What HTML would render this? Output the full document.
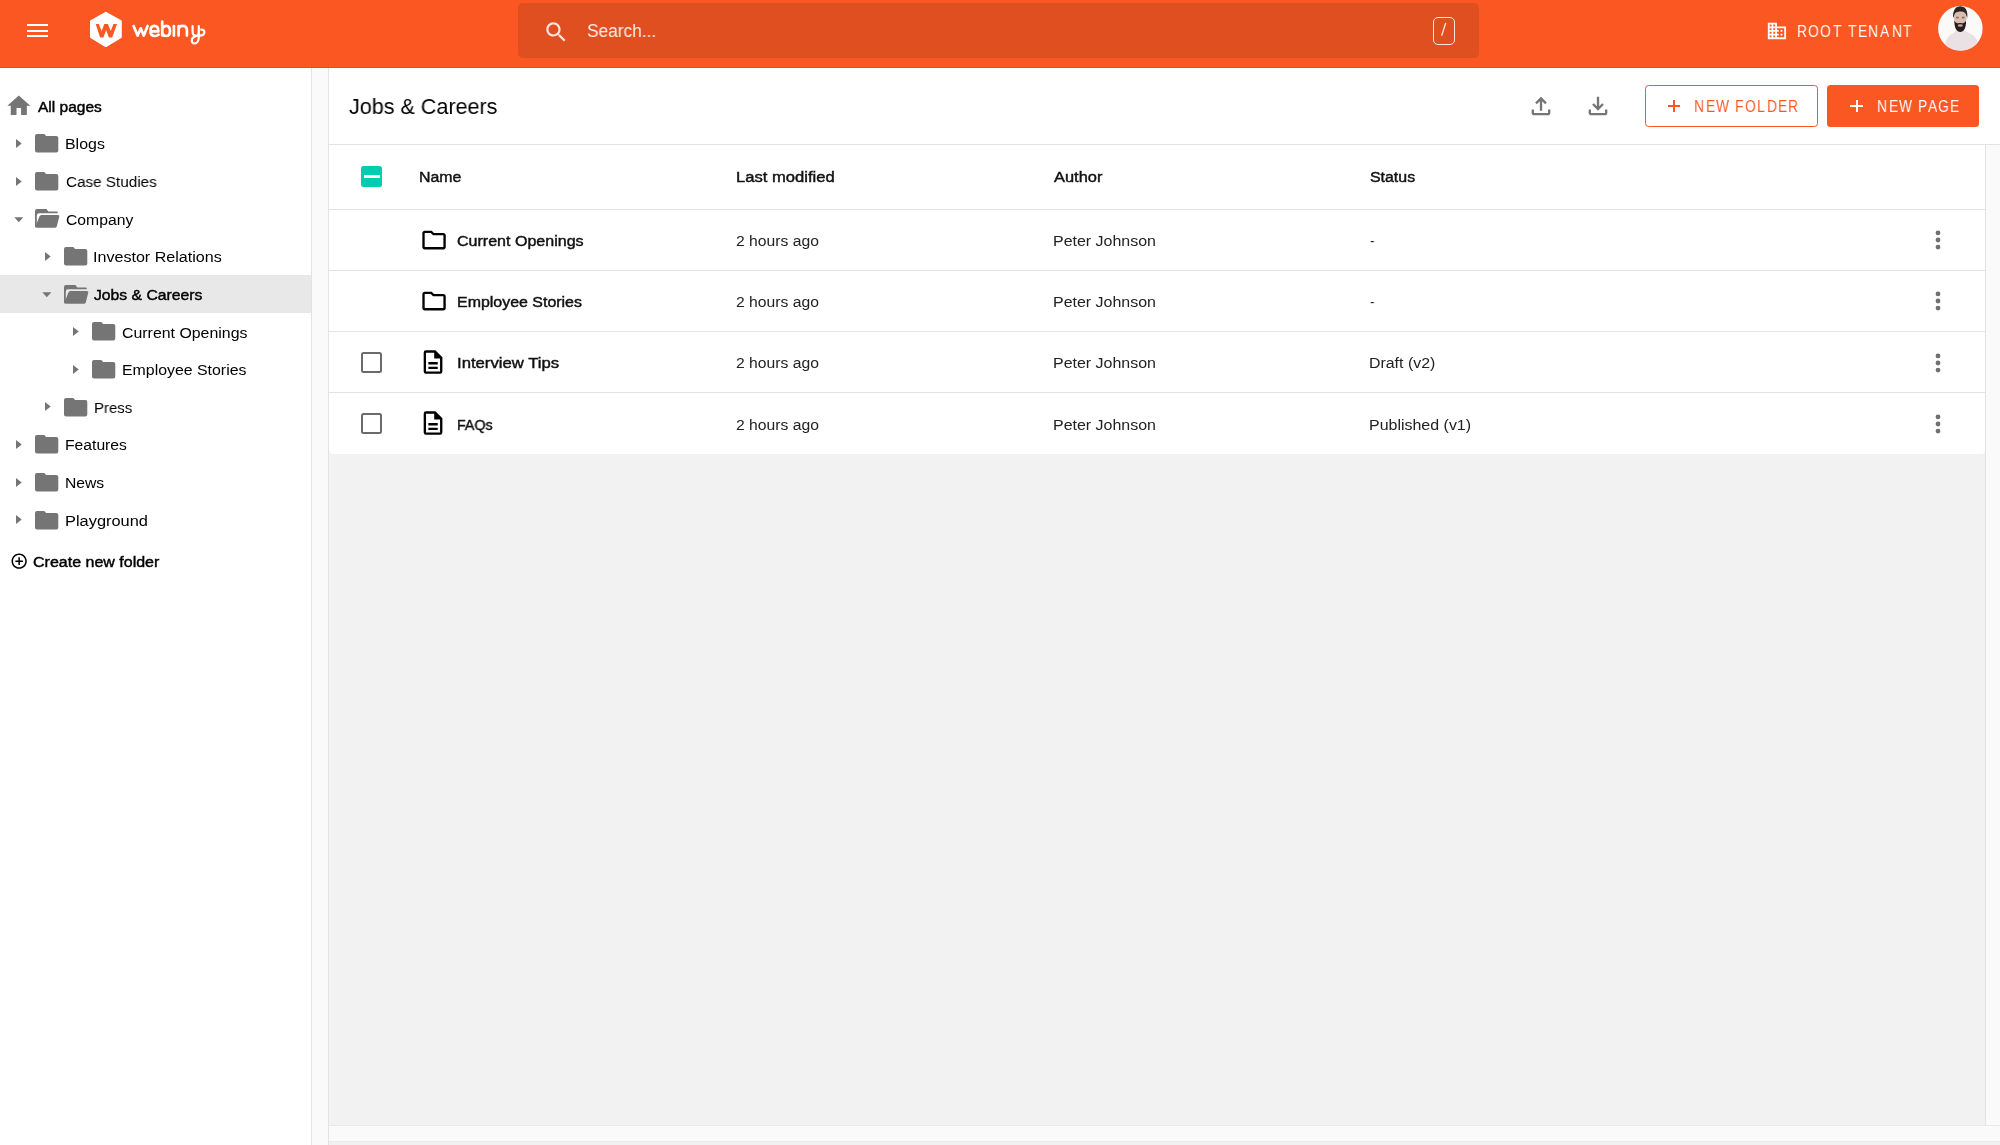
<!DOCTYPE html>
<html><head><meta charset="utf-8"><title>Webiny</title>
<style>
html,body{margin:0;padding:0;width:2000px;height:1145px;overflow:hidden;background:#f1f1f1;font-family:"Liberation Sans",sans-serif}
.r{position:absolute}
.t{position:absolute;white-space:nowrap;transform-origin:0 0;will-change:transform}
.i{position:absolute;overflow:visible}
</style></head><body>
<!-- top bar -->
<div class="r" style="left:0;top:0;width:2000px;height:67px;background:#fa5723"></div>
<div class="r" style="left:0;top:66.5px;width:2000px;height:1.3px;background:#f44a10"></div>
<div class="r" style="left:518px;top:2.6px;width:961.3px;height:55.9px;background:#e04f20;border-radius:5px"></div>
<!-- sidebar -->
<div class="r" style="left:0;top:68px;width:311px;height:1077px;background:#fff"></div>
<div class="r" style="left:311px;top:68px;width:1px;height:1077px;background:#e3e3e3"></div>
<div class="r" style="left:312px;top:68px;width:16px;height:1077px;background:#fafafa"></div>
<div class="r" style="left:328px;top:68px;width:1px;height:1077px;background:#e3e3e3"></div>
<div class="r" style="left:0;top:275px;width:311px;height:37.5px;background:#e8e8e8"></div>
<!-- content header -->
<div class="r" style="left:329px;top:68px;width:1671px;height:76px;background:#fff"></div>
<div class="r" style="left:329px;top:144px;width:1671px;height:1px;background:#e3e3e3"></div>
<!-- right strip -->
<div class="r" style="left:1985px;top:145px;width:1px;height:981px;background:#e3e3e3"></div>
<div class="r" style="left:1986px;top:145px;width:14px;height:981px;background:#fafafa"></div>
<!-- gray area -->
<div class="r" style="left:329px;top:145px;width:1656px;height:980px;background:#f2f2f2"></div>
<div class="r" style="left:329px;top:1125px;width:1671px;height:1px;background:#e8e8e8"></div>
<div class="r" style="left:329px;top:1126px;width:1671px;height:15px;background:#fafafa"></div>
<div class="r" style="left:329px;top:1141px;width:1671px;height:1px;background:#ebebeb"></div>
<!-- table -->
<div class="r" style="left:329px;top:145px;width:1656px;height:308.5px;background:#fff;border-radius:0 0 4px 4px"></div>
<div class="r" style="left:329px;top:209px;width:1656px;height:1px;background:#e3e3e3"></div>
<div class="r" style="left:329px;top:270px;width:1656px;height:1px;background:#e3e3e3"></div>
<div class="r" style="left:329px;top:331px;width:1656px;height:1px;background:#e3e3e3"></div>
<div class="r" style="left:329px;top:392px;width:1656px;height:1px;background:#e3e3e3"></div>
<!-- buttons -->
<div class="r" style="left:1644.6px;top:85.3px;width:173px;height:41.5px;border:1.5px solid #fa5723;border-radius:3.5px;box-sizing:border-box"></div>
<div class="r" style="left:1827.2px;top:85px;width:151.7px;height:41.8px;background:#fa5723;border-radius:3.5px"></div>
<div class="r" style="left:27px;top:24px;width:21px;height:2.2px;background:#fff"></div>
<div class="r" style="left:27px;top:29.6px;width:21px;height:2.2px;background:#fff"></div>
<div class="r" style="left:27px;top:35.3px;width:21px;height:2.2px;background:#fff"></div>
<svg class="i" style="left:88.00px;top:10.00px;width:36.00px;height:40.00px" viewBox="88 10 36 40"><path d="M105.8 12.9 L120.7 21.1 L120.7 37 L105.8 46 L91.1 37 L91.1 21.1 Z" fill="#fff" stroke="#fff" stroke-width="2.2" stroke-linejoin="round"/><path d="M95.7 24 L98.8 24 L101.6 31 L104.4 24 L107.9 24 L110.7 31 L113.5 24 L117 24 L112.2 37.6 L108.9 37.6 L106.15 29.9 L103.4 37.6 L100.1 37.6 Z" fill="#fa5723"/></svg>
<svg class="i" style="left:128.00px;top:16.00px;width:84.00px;height:32.00px" viewBox="128 16 84 32"><g fill="none" stroke="#fff" stroke-width="2.7" stroke-linecap="round" stroke-linejoin="round"><path d="M133.6 26 L137.6 35.6 L140.7 28.3 L143.8 35.6 L147.6 26"/><path d="M150.8 31.4 H158.4 C158.4 27.7 156.5 25.8 154.4 25.8 C151.8 25.8 150.4 28 150.4 31 C150.4 34.2 152.3 36 155 36 C156.6 36 157.7 35.5 158.6 34.6"/><path d="M162.2 21.5 V35.5 M162.2 30.8 C162.2 27.6 164 25.8 166.2 25.8 C168.6 25.8 170 28 170 31 C170 34 168.6 36 166.2 36 C164 36 162.2 34.4 162.2 31"/><path d="M173.9 26.2 V35.6"/><path d="M178.6 35.6 V26.2 M178.6 30.2 C178.6 27.3 180.3 25.8 182.6 25.8 C185.4 25.8 186.9 27.5 186.9 30.2 V35.6"/><path d="M192.6 26.2 V31.5 C192.6 34.5 194.2 35.8 196.2 35.8 C198 35.8 198.8 34.8 198.8 32 V26.2 V37 C198.8 41 197 43.5 194.6 43.5 C192.4 43.5 191.6 41.7 191.8 40.2 C192.2 37 195.5 35.6 199.5 35.6 C202.5 35.6 204.4 34 204.4 32 C204.4 30.4 203 29.3 201.2 29.6" stroke-width="2.2"/></g></svg>
<svg class="i" style="left:542.80px;top:18.60px;width:26.40px;height:26.40px" viewBox="0 0 24 24"><path fill="rgba(255,255,255,0.85)" d="M15.5 14h-.79l-.28-.27C15.41 12.59 16 11.11 16 9.5 16 5.91 13.09 3 9.5 3S3 5.91 3 9.5 5.91 16 9.5 16c1.61 0 3.09-.59 4.23-1.57l.27.28v.79l5 4.99L20.49 19l-4.99-5zm-6 0C7.01 14 5 11.99 5 9.5S7.01 5 9.5 5 14 7.01 14 9.5 11.99 14 9.5 14z"/></svg>
<div class="r" style="left:1432.6px;top:16.6px;width:22.2px;height:28.2px;border:1.6px solid rgba(255,255,255,0.85);border-radius:5px;box-sizing:border-box"></div>
<svg class="i" style="left:1436.00px;top:18.00px;width:16.00px;height:24.00px" viewBox="1436 18 16 24"><path d="M1441.8 35.3 L1445.6 23.3" stroke="rgba(255,255,255,0.85)" stroke-width="1.3" stroke-linecap="round"/></svg>
<svg class="i" style="left:1766.20px;top:19.80px;width:21.90px;height:21.90px" viewBox="0 0 24 24"><path fill="#fff" d="M12 7V3H2v18h20V7H12zM6 19H4v-2h2v2zm0-4H4v-2h2v2zm0-4H4V9h2v2zm0-4H4V5h2v2zm4 12H8v-2h2v2zm0-4H8v-2h2v2zm0-4H8V9h2v2zm0-4H8V5h2v2zm10 12h-8v-2h2v-2h-2v-2h2v-2h-2V9h8v10zm-2-8h-2v2h2v-2zm0 4h-2v2h2v-2z"/></svg>
<svg class="i" style="left:1937.60px;top:5.80px;width:44.80px;height:44.80px" viewBox="0 0 45 45"><defs><clipPath id="ac"><circle cx="22.5" cy="22.5" r="22.4"/></clipPath></defs><g clip-path="url(#ac)"><rect width="45" height="45" fill="#fcfaf9"/><path d="M6 45 C7 36 9 30 15 27.5 L19 24 L26 24 L31 27 C37 29 41 34 42 45 Z" fill="#e9e1e4"/><path d="M7 40 C9 41 11 42 12 45 L6 45 Z" fill="#d9b9a9"/><ellipse cx="22.3" cy="12.2" rx="6.4" ry="8.2" fill="#dcbcae"/><path d="M15.2 12 C14.6 5 17.5 0.3 22.3 0.3 C27.2 0.3 30.2 4 29.4 12 L28.4 9.5 C27.8 6.2 25 5.6 22.3 5.6 C19.5 5.6 17 6.3 16.3 9.5 Z" fill="#2b2524"/><path d="M16.4 14.8 C16.4 22.5 19 26 22.4 26 C25.8 26 28.2 22.5 28.2 14.8 C26.5 17.8 24 17.4 22.4 17.2 C20.5 17.4 18 17.8 16.4 14.8 Z" fill="#251e1c"/><rect x="18.2" y="10.8" width="2.6" height="1.6" fill="#8a6a5f"/><rect x="24" y="10.8" width="2.6" height="1.6" fill="#8a6a5f"/><ellipse cx="22.4" cy="19.6" rx="2.6" ry="1.2" fill="#c9a99c"/></g></svg>
<svg class="i" style="left:4.70px;top:92.00px;width:27.60px;height:27.60px" viewBox="0 0 24 24"><path fill="#757575" d="M10 20v-6h4v6h5v-8h3L12 3 2 12h3v8z"/></svg>
<svg class="i" style="left:34.35px;top:133.20px;width:26.00px;height:21.00px" viewBox="-1 -1 26 21"><path fill="#757575" d="M2 0 H9.3 L11.1 2 H21.3 Q23.3 2 23.3 4 V16.55 Q23.3 18.55 21.3 18.55 H2 Q0 18.55 0 16.55 V2 Q0 0 2 0 Z"/></svg>
<svg class="i" style="left:15.40px;top:138.00px;width:8.00px;height:11.00px" viewBox="15.399999999999999 138.0 8 11"><path fill="#757575" d="M16.4 139.0 L22.099999999999998 143.45 L16.4 147.9 Z"/></svg>
<svg class="i" style="left:34.35px;top:170.84px;width:26.00px;height:21.00px" viewBox="-1 -1 26 21"><path fill="#757575" d="M2 0 H9.3 L11.1 2 H21.3 Q23.3 2 23.3 4 V16.55 Q23.3 18.55 21.3 18.55 H2 Q0 18.55 0 16.55 V2 Q0 0 2 0 Z"/></svg>
<svg class="i" style="left:15.40px;top:175.64px;width:8.00px;height:11.00px" viewBox="15.399999999999999 175.64 8 11"><path fill="#757575" d="M16.4 176.64 L22.099999999999998 181.08999999999997 L16.4 185.54 Z"/></svg>
<svg class="i" style="left:34.30px;top:208.28px;width:27.00px;height:21.00px" viewBox="-1 -1 27 21"><path fill="#757575" d="M2 0 H11.4 L13.4 2.5 H21.9 Q22.9 2.5 22.9 3.4 Q22.9 4.2 21.9 4.2 H4 Q1.8 4.2 1.8 6.4 V17 L0.6 18.6 Q0 18 0 16.9 V2 Q0 0 2 0 Z"/><path fill="#757575" d="M6.6 6 H23 Q24.6 6 24.3 7.6 L21.8 17.2 Q21.4 18.8 19.8 18.8 H2 Q0.3 18.8 0.6 17.3 L4.4 7.6 Q4.8 6 6.6 6 Z"/></svg>
<svg class="i" style="left:13.00px;top:216.08px;width:12.00px;height:8.00px" viewBox="13.0 216.07999999999998 12 8"><path fill="#757575" d="M14.3 217.38 L23.3 217.38 L18.8 222.38 Z"/></svg>
<svg class="i" style="left:62.55px;top:246.12px;width:26.00px;height:21.00px" viewBox="-1 -1 26 21"><path fill="#757575" d="M2 0 H9.3 L11.1 2 H21.3 Q23.3 2 23.3 4 V16.55 Q23.3 18.55 21.3 18.55 H2 Q0 18.55 0 16.55 V2 Q0 0 2 0 Z"/></svg>
<svg class="i" style="left:43.60px;top:250.92px;width:8.00px;height:11.00px" viewBox="43.599999999999994 250.92000000000002 8 11"><path fill="#757575" d="M44.599999999999994 251.92000000000002 L50.3 256.37 L44.599999999999994 260.82 Z"/></svg>
<svg class="i" style="left:62.50px;top:283.56px;width:27.00px;height:21.00px" viewBox="-1 -1 27 21"><path fill="#757575" d="M2 0 H11.4 L13.4 2.5 H21.9 Q22.9 2.5 22.9 3.4 Q22.9 4.2 21.9 4.2 H4 Q1.8 4.2 1.8 6.4 V17 L0.6 18.6 Q0 18 0 16.9 V2 Q0 0 2 0 Z"/><path fill="#757575" d="M6.6 6 H23 Q24.6 6 24.3 7.6 L21.8 17.2 Q21.4 18.8 19.8 18.8 H2 Q0.3 18.8 0.6 17.3 L4.4 7.6 Q4.8 6 6.6 6 Z"/></svg>
<svg class="i" style="left:41.20px;top:291.36px;width:12.00px;height:8.00px" viewBox="41.2 291.36 12 8"><path fill="#757575" d="M42.5 292.66 L51.5 292.66 L47.0 297.66 Z"/></svg>
<svg class="i" style="left:90.75px;top:321.40px;width:26.00px;height:21.00px" viewBox="-1 -1 26 21"><path fill="#757575" d="M2 0 H9.3 L11.1 2 H21.3 Q23.3 2 23.3 4 V16.55 Q23.3 18.55 21.3 18.55 H2 Q0 18.55 0 16.55 V2 Q0 0 2 0 Z"/></svg>
<svg class="i" style="left:71.80px;top:326.20px;width:8.00px;height:11.00px" viewBox="71.8 326.2 8 11"><path fill="#757575" d="M72.8 327.2 L78.5 331.65 L72.8 336.09999999999997 Z"/></svg>
<svg class="i" style="left:90.75px;top:359.04px;width:26.00px;height:21.00px" viewBox="-1 -1 26 21"><path fill="#757575" d="M2 0 H9.3 L11.1 2 H21.3 Q23.3 2 23.3 4 V16.55 Q23.3 18.55 21.3 18.55 H2 Q0 18.55 0 16.55 V2 Q0 0 2 0 Z"/></svg>
<svg class="i" style="left:71.80px;top:363.84px;width:8.00px;height:11.00px" viewBox="71.8 363.84 8 11"><path fill="#757575" d="M72.8 364.84 L78.5 369.28999999999996 L72.8 373.73999999999995 Z"/></svg>
<svg class="i" style="left:62.55px;top:396.68px;width:26.00px;height:21.00px" viewBox="-1 -1 26 21"><path fill="#757575" d="M2 0 H9.3 L11.1 2 H21.3 Q23.3 2 23.3 4 V16.55 Q23.3 18.55 21.3 18.55 H2 Q0 18.55 0 16.55 V2 Q0 0 2 0 Z"/></svg>
<svg class="i" style="left:43.60px;top:401.48px;width:8.00px;height:11.00px" viewBox="43.599999999999994 401.48 8 11"><path fill="#757575" d="M44.599999999999994 402.48 L50.3 406.93 L44.599999999999994 411.38 Z"/></svg>
<svg class="i" style="left:34.35px;top:434.32px;width:26.00px;height:21.00px" viewBox="-1 -1 26 21"><path fill="#757575" d="M2 0 H9.3 L11.1 2 H21.3 Q23.3 2 23.3 4 V16.55 Q23.3 18.55 21.3 18.55 H2 Q0 18.55 0 16.55 V2 Q0 0 2 0 Z"/></svg>
<svg class="i" style="left:15.40px;top:439.12px;width:8.00px;height:11.00px" viewBox="15.399999999999999 439.12 8 11"><path fill="#757575" d="M16.4 440.12 L22.099999999999998 444.57 L16.4 449.02 Z"/></svg>
<svg class="i" style="left:34.35px;top:471.96px;width:26.00px;height:21.00px" viewBox="-1 -1 26 21"><path fill="#757575" d="M2 0 H9.3 L11.1 2 H21.3 Q23.3 2 23.3 4 V16.55 Q23.3 18.55 21.3 18.55 H2 Q0 18.55 0 16.55 V2 Q0 0 2 0 Z"/></svg>
<svg class="i" style="left:15.40px;top:476.76px;width:8.00px;height:11.00px" viewBox="15.399999999999999 476.76 8 11"><path fill="#757575" d="M16.4 477.76 L22.099999999999998 482.21 L16.4 486.65999999999997 Z"/></svg>
<svg class="i" style="left:34.35px;top:509.60px;width:26.00px;height:21.00px" viewBox="-1 -1 26 21"><path fill="#757575" d="M2 0 H9.3 L11.1 2 H21.3 Q23.3 2 23.3 4 V16.55 Q23.3 18.55 21.3 18.55 H2 Q0 18.55 0 16.55 V2 Q0 0 2 0 Z"/></svg>
<svg class="i" style="left:15.40px;top:514.40px;width:8.00px;height:11.00px" viewBox="15.399999999999999 514.4 8 11"><path fill="#757575" d="M16.4 515.4 L22.099999999999998 519.85 L16.4 524.3 Z"/></svg>
<svg class="i" style="left:9.60px;top:551.90px;width:18.30px;height:18.30px" viewBox="0 0 24 24"><path fill="#000" d="M13 7h-2v4H7v2h4v4h2v-4h4v-2h-4V7zm-1-5C6.48 2 2 6.48 2 12s4.48 10 10 10 10-4.48 10-10S17.52 2 12 2zm0 18c-4.41 0-8-3.59-8-8s3.59-8 8-8 8 3.59 8 8-3.59 8-8 8z"/></svg>
<svg class="i" style="left:1527.30px;top:91.80px;width:28.00px;height:28.00px" viewBox="0 0 24 24"><path fill="#757575" d="M11 16V7.85l-2.6 2.6L7 9l5-5 5 5-1.4 1.45-2.6-2.6V16Zm-5 4q-.825 0-1.412-.587Q4 18.825 4 18v-3h2v3h12v-3h2v3q0 .825-.587 1.413Q18.825 20 18 20Z"/></svg>
<svg class="i" style="left:1583.60px;top:91.50px;width:28.00px;height:28.00px" viewBox="0 0 24 24"><path fill="#757575" d="M12 16l-5-5 1.4-1.45 2.6 2.6V4h2v8.15l2.6-2.6L17 11Zm-6 4q-.825 0-1.412-.587Q4 18.825 4 18v-3h2v3h12v-3h2v3q0 .825-.587 1.413Q18.825 20 18 20Z"/></svg>
<div class="r" style="left:1667.8px;top:105.3px;width:12.4px;height:1.9px;background:#fa5723"></div>
<div class="r" style="left:1673.05px;top:100.25px;width:1.9px;height:12px;background:#fa5723"></div>
<div class="r" style="left:1850.3px;top:105.2px;width:12.6px;height:1.9px;background:#fff"></div>
<div class="r" style="left:1855.65px;top:100.1px;width:1.9px;height:12.1px;background:#fff"></div>
<svg class="i" style="left:419.56px;top:225.57px;width:28.08px;height:28.08px" viewBox="0 0 24 24"><path fill="#000" d="M9.17 6l2 2H20v10H4V6h5.17M10 4H4c-1.1 0-1.99.9-1.99 2L2 18c0 1.1.9 2 2 2h16c1.1 0 2-.9 2-2V8c0-1.1-.9-2-2-2h-8l-2-2z"/></svg>
<svg class="i" style="left:419.56px;top:286.87px;width:28.08px;height:28.08px" viewBox="0 0 24 24"><path fill="#000" d="M9.17 6l2 2H20v10H4V6h5.17M10 4H4c-1.1 0-1.99.9-1.99 2L2 18c0 1.1.9 2 2 2h16c1.1 0 2-.9 2-2V8c0-1.1-.9-2-2-2h-8l-2-2z"/></svg>
<svg class="i" style="left:419.40px;top:347.96px;width:28.08px;height:28.08px" viewBox="0 0 24 24"><path fill="#000" fill-rule="evenodd" d="M6 2 H14 L20 8 V20 Q20 22 18 22 H6 Q4 22 4 20 V4 Q4 2 6 2 Z M6 4 V20 H18 V9 H13 V4 Z"/><path fill="#000" d="M8 12h8v2H8zM8 16h8v2H8z"/></svg>
<svg class="i" style="left:419.40px;top:409.26px;width:28.08px;height:28.08px" viewBox="0 0 24 24"><path fill="#000" fill-rule="evenodd" d="M6 2 H14 L20 8 V20 Q20 22 18 22 H6 Q4 22 4 20 V4 Q4 2 6 2 Z M6 4 V20 H18 V9 H13 V4 Z"/><path fill="#000" d="M8 12h8v2H8zM8 16h8v2H8z"/></svg>
<div class="r" style="left:361.4px;top:351.50px;width:21px;height:21px;border:2px solid #6b6b6b;border-radius:2.5px;box-sizing:border-box"></div>
<div class="r" style="left:361.4px;top:412.80px;width:21px;height:21px;border:2px solid #6b6b6b;border-radius:2.5px;box-sizing:border-box"></div>
<svg class="i" style="left:1923.70px;top:226.00px;width:28.00px;height:28.00px" viewBox="0 0 28 28"><g fill="#707070"><circle cx="14" cy="6.9" r="2.4"/><circle cx="14" cy="14" r="2.4"/><circle cx="14" cy="21.1" r="2.4"/></g></svg>
<svg class="i" style="left:1923.70px;top:287.30px;width:28.00px;height:28.00px" viewBox="0 0 28 28"><g fill="#707070"><circle cx="14" cy="6.9" r="2.4"/><circle cx="14" cy="14" r="2.4"/><circle cx="14" cy="21.1" r="2.4"/></g></svg>
<svg class="i" style="left:1923.70px;top:348.60px;width:28.00px;height:28.00px" viewBox="0 0 28 28"><g fill="#707070"><circle cx="14" cy="6.9" r="2.4"/><circle cx="14" cy="14" r="2.4"/><circle cx="14" cy="21.1" r="2.4"/></g></svg>
<svg class="i" style="left:1923.70px;top:409.90px;width:28.00px;height:28.00px" viewBox="0 0 28 28"><g fill="#707070"><circle cx="14" cy="6.9" r="2.4"/><circle cx="14" cy="14" r="2.4"/><circle cx="14" cy="21.1" r="2.4"/></g></svg>
<div class="r" style="left:361.4px;top:165.75px;width:21px;height:21px;background:#00ccb0;border-radius:2.5px"></div>
<div class="r" style="left:364.2px;top:175.1px;width:15.6px;height:2.6px;background:#fff"></div>
<div class="t" style="left:37.70px;top:96px;font-size:15.5px;line-height:21px;font-weight:normal;color:#000;transform:scaleX(1.0003);-webkit-text-stroke:0.45px #000">All pages</div>
<div class="t" style="left:65.26px;top:133px;font-size:15.5px;line-height:21px;font-weight:normal;color:#000;transform:scaleX(1.0276)">Blogs</div>
<div class="t" style="left:65.79px;top:171px;font-size:15.5px;line-height:21px;font-weight:normal;color:#000;transform:scaleX(0.9837)">Case Studies</div>
<div class="t" style="left:65.76px;top:209px;font-size:15.5px;line-height:21px;font-weight:normal;color:#000;transform:scaleX(1.0136)">Company</div>
<div class="t" style="left:93.44px;top:246px;font-size:15.5px;line-height:21px;font-weight:normal;color:#000;transform:scaleX(1.0379)">Investor Relations</div>
<div class="t" style="left:94.45px;top:284px;font-size:15.5px;line-height:21px;font-weight:normal;color:#000;transform:scaleX(1.0133);-webkit-text-stroke:0.45px #000">Jobs &amp; Careers</div>
<div class="t" style="left:122.16px;top:322px;font-size:15.5px;line-height:21px;font-weight:normal;color:#000;transform:scaleX(1.0253)">Current Openings</div>
<div class="t" style="left:121.66px;top:359px;font-size:15.5px;line-height:21px;font-weight:normal;color:#000;transform:scaleX(1.0244)">Employee Stories</div>
<div class="t" style="left:93.53px;top:397px;font-size:15.5px;line-height:21px;font-weight:normal;color:#000;transform:scaleX(0.9677)">Press</div>
<div class="t" style="left:65.27px;top:434px;font-size:15.5px;line-height:21px;font-weight:normal;color:#000;transform:scaleX(1.0122)">Features</div>
<div class="t" style="left:65.27px;top:472px;font-size:15.5px;line-height:21px;font-weight:normal;color:#000;transform:scaleX(1.0118)">News</div>
<div class="t" style="left:65.22px;top:510px;font-size:15.5px;line-height:21px;font-weight:normal;color:#000;transform:scaleX(1.0572)">Playground</div>
<div class="t" style="left:32.85px;top:551px;font-size:15.5px;line-height:21px;font-weight:normal;color:#000;transform:scaleX(1.0326);-webkit-text-stroke:0.45px #000">Create new folder</div>
<div class="t" style="left:587.26px;top:19px;font-size:18px;line-height:24px;font-weight:normal;color:rgba(255,255,255,0.9);transform:scaleX(0.9607)">Search...</div>
<div class="t" style="left:348.96px;top:92px;font-size:22px;line-height:29px;font-weight:normal;color:#000;transform:scaleX(0.9795)">Jobs &amp; Careers</div>
<div class="t" style="left:419.06px;top:166px;font-size:15.5px;line-height:21px;font-weight:normal;color:#111;transform:scaleX(1.0251);-webkit-text-stroke:0.45px #111">Name</div>
<div class="t" style="left:735.70px;top:166px;font-size:15.5px;line-height:21px;font-weight:normal;color:#111;transform:scaleX(1.0709);-webkit-text-stroke:0.45px #111">Last modified</div>
<div class="t" style="left:1053.50px;top:166px;font-size:15.5px;line-height:21px;font-weight:normal;color:#111;transform:scaleX(1.0594);-webkit-text-stroke:0.45px #111">Author</div>
<div class="t" style="left:1370.00px;top:166px;font-size:15.5px;line-height:21px;font-weight:normal;color:#111;transform:scaleX(1.0262);-webkit-text-stroke:0.45px #111">Status</div>
<div class="t" style="left:457.15px;top:230px;font-size:15.5px;line-height:21px;font-weight:normal;color:#111;transform:scaleX(1.0348);-webkit-text-stroke:0.45px #111">Current Openings</div>
<div class="t" style="left:736.06px;top:230px;font-size:15.5px;line-height:21px;font-weight:normal;color:#222;transform:scaleX(1.0123)">2 hours ago</div>
<div class="t" style="left:1052.75px;top:230px;font-size:15.5px;line-height:21px;font-weight:normal;color:#222;transform:scaleX(1.0304)">Peter Johnson</div>
<div class="t" style="left:1370.08px;top:230px;font-size:15.5px;line-height:21px;font-weight:normal;color:#222;transform:scaleX(0.8744)">-</div>
<div class="t" style="left:456.65px;top:291px;font-size:15.5px;line-height:21px;font-weight:normal;color:#111;transform:scaleX(1.0286);-webkit-text-stroke:0.45px #111">Employee Stories</div>
<div class="t" style="left:736.06px;top:291px;font-size:15.5px;line-height:21px;font-weight:normal;color:#222;transform:scaleX(1.0123)">2 hours ago</div>
<div class="t" style="left:1052.75px;top:291px;font-size:15.5px;line-height:21px;font-weight:normal;color:#222;transform:scaleX(1.0304)">Peter Johnson</div>
<div class="t" style="left:1370.08px;top:291px;font-size:15.5px;line-height:21px;font-weight:normal;color:#222;transform:scaleX(0.8744)">-</div>
<div class="t" style="left:456.59px;top:352px;font-size:15.5px;line-height:21px;font-weight:normal;color:#111;transform:scaleX(1.0778);-webkit-text-stroke:0.45px #111">Interview Tips</div>
<div class="t" style="left:736.06px;top:352px;font-size:15.5px;line-height:21px;font-weight:normal;color:#222;transform:scaleX(1.0123)">2 hours ago</div>
<div class="t" style="left:1052.75px;top:352px;font-size:15.5px;line-height:21px;font-weight:normal;color:#222;transform:scaleX(1.0304)">Peter Johnson</div>
<div class="t" style="left:1369.26px;top:352px;font-size:15.5px;line-height:21px;font-weight:normal;color:#222;transform:scaleX(1.0260)">Draft (v2)</div>
<div class="t" style="left:456.79px;top:414px;font-size:15.5px;line-height:21px;font-weight:normal;color:#111;transform:scaleX(0.9201);-webkit-text-stroke:0.45px #111">FAQs</div>
<div class="t" style="left:736.06px;top:414px;font-size:15.5px;line-height:21px;font-weight:normal;color:#222;transform:scaleX(1.0123)">2 hours ago</div>
<div class="t" style="left:1052.75px;top:414px;font-size:15.5px;line-height:21px;font-weight:normal;color:#222;transform:scaleX(1.0304)">Peter Johnson</div>
<div class="t" style="left:1369.25px;top:414px;font-size:15.5px;line-height:21px;font-weight:normal;color:#222;transform:scaleX(1.0302)">Published (v1)</div>
<div class="t" style="left:1797.23px;top:21px;font-size:16px;line-height:21px;color:#fff;transform:scaleX(0.86)">R</div>
<div class="t" style="left:1808.38px;top:21px;font-size:16px;line-height:21px;color:#fff;transform:scaleX(0.86)">O</div>
<div class="t" style="left:1820.38px;top:21px;font-size:16px;line-height:21px;color:#fff;transform:scaleX(0.86)">O</div>
<div class="t" style="left:1832.96px;top:21px;font-size:16px;line-height:21px;color:#fff;transform:scaleX(0.86)">T</div>
<div class="t" style="left:1847.66px;top:21px;font-size:16px;line-height:21px;color:#fff;transform:scaleX(0.86)">T</div>
<div class="t" style="left:1857.66px;top:21px;font-size:16px;line-height:21px;color:#fff;transform:scaleX(0.86)">E</div>
<div class="t" style="left:1868.06px;top:21px;font-size:16px;line-height:21px;color:#fff;transform:scaleX(0.86)">N</div>
<div class="t" style="left:1880.08px;top:21px;font-size:16px;line-height:21px;color:#fff;transform:scaleX(0.86)">A</div>
<div class="t" style="left:1891.75px;top:21px;font-size:16px;line-height:21px;color:#fff;transform:scaleX(0.86)">N</div>
<div class="t" style="left:1903.16px;top:21px;font-size:16px;line-height:21px;color:#fff;transform:scaleX(0.86)">T</div>
<div class="t" style="left:1694.13px;top:96px;font-size:16px;line-height:21px;color:#fa5723;transform:scaleX(0.86)">N</div>
<div class="t" style="left:1705.61px;top:96px;font-size:16px;line-height:21px;color:#fa5723;transform:scaleX(0.86)">E</div>
<div class="t" style="left:1715.79px;top:96px;font-size:16px;line-height:21px;color:#fa5723;transform:scaleX(0.86)">W</div>
<div class="t" style="left:1735.26px;top:96px;font-size:16px;line-height:21px;color:#fa5723;transform:scaleX(0.86)">F</div>
<div class="t" style="left:1744.72px;top:96px;font-size:16px;line-height:21px;color:#fa5723;transform:scaleX(0.86)">O</div>
<div class="t" style="left:1757.31px;top:96px;font-size:16px;line-height:21px;color:#fa5723;transform:scaleX(0.86)">L</div>
<div class="t" style="left:1766.83px;top:96px;font-size:16px;line-height:21px;color:#fa5723;transform:scaleX(0.86)">D</div>
<div class="t" style="left:1778.01px;top:96px;font-size:16px;line-height:21px;color:#fa5723;transform:scaleX(0.86)">E</div>
<div class="t" style="left:1788.28px;top:96px;font-size:16px;line-height:21px;color:#fa5723;transform:scaleX(0.86)">R</div>
<div class="t" style="left:1876.83px;top:96px;font-size:16px;line-height:21px;color:#fff;transform:scaleX(0.86)">N</div>
<div class="t" style="left:1888.54px;top:96px;font-size:16px;line-height:21px;color:#fff;transform:scaleX(0.86)">E</div>
<div class="t" style="left:1898.74px;top:96px;font-size:16px;line-height:21px;color:#fff;transform:scaleX(0.86)">W</div>
<div class="t" style="left:1917.69px;top:96px;font-size:16px;line-height:21px;color:#fff;transform:scaleX(0.86)">P</div>
<div class="t" style="left:1927.88px;top:96px;font-size:16px;line-height:21px;color:#fff;transform:scaleX(0.86)">A</div>
<div class="t" style="left:1938.29px;top:96px;font-size:16px;line-height:21px;color:#fff;transform:scaleX(0.86)">G</div>
<div class="t" style="left:1949.61px;top:96px;font-size:16px;line-height:21px;color:#fff;transform:scaleX(0.86)">E</div>
</body></html>
